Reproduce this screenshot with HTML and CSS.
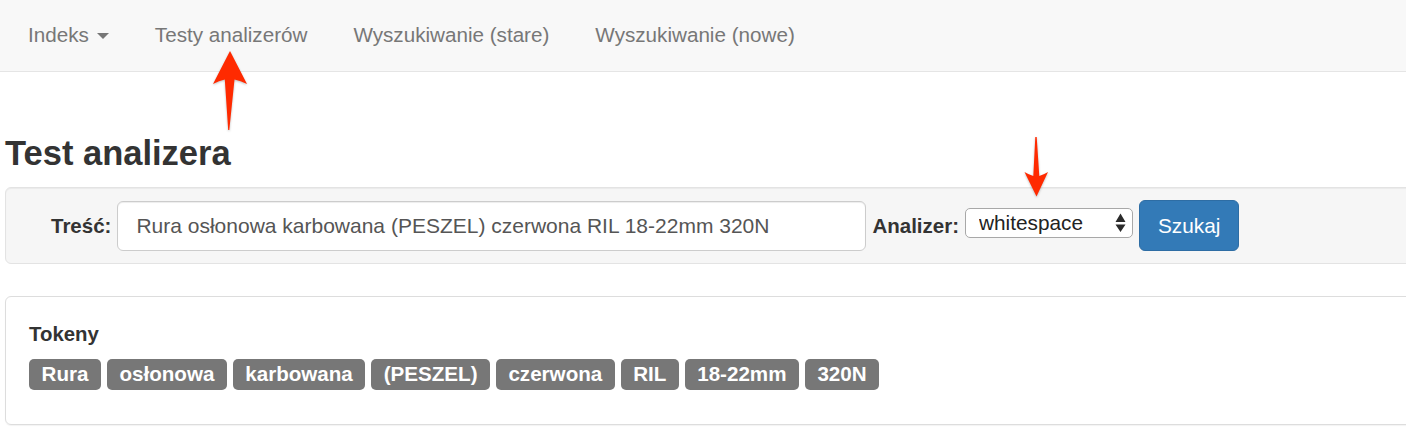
FILE: index.html
```html
<!DOCTYPE html>
<html lang="pl">
<head>
<meta charset="utf-8">
<title>Test analizera</title>
<link rel="stylesheet" href="styles.css">
</head>
<body>
<nav class="navbar">
  <ul class="nav">
    <li><a href="#">Indeks<span class="caret"></span></a></li>
    <li><a href="#">Testy analizerów</a></li>
    <li><a href="#">Wyszukiwanie (stare)</a></li>
    <li><a href="#">Wyszukiwanie (nowe)</a></li>
  </ul>
</nav>
<main class="container">
  <h3 class="title">Test analizera</h3>
  <form class="well">
    <label class="lbl lbl-first" for="q">Treść:</label>
    <input id="q" class="input" type="text" value="Rura osłonowa karbowana (PESZEL) czerwona RIL 18-22mm 320N">
    <label class="lbl" for="an">Analizer:</label>
    <span class="select-wrap">
      <select id="an" class="select"><option>whitespace</option></select>
      <svg class="sel-arrows" width="11" height="19" viewBox="0 0 11 19"><path d="M0.5 9 L5.5 0.5 L10.5 9 Z M0.5 11.5 L5.5 19 L10.5 11.5 Z" fill="#2b2b2b"/></svg>
    </span>
    <button class="btn" type="button">Szukaj</button>
  </form>
  <section class="panel">
    <h4 class="panel-title">Tokeny</h4>
    <div class="tokens">
      <span class="label">Rura</span>
      <span class="label">osłonowa</span>
      <span class="label">karbowana</span>
      <span class="label">(PESZEL)</span>
      <span class="label">czerwona</span>
      <span class="label">RIL</span>
      <span class="label">18-22mm</span>
      <span class="label">320N</span>
    </div>
  </section>
</main>
<svg class="annot annot-up" width="50" height="90" viewBox="0 0 50 90">
  <path d="M25 6 L42 39 Q35.5 35.5 29.5 34.5 L24.3 85 L23.2 85 L19.8 34.5 Q14 35.5 8 39 Z" fill="#ff2a00"/>
</svg>
<svg class="annot annot-down" width="44" height="70" viewBox="0 0 44 70">
  <path d="M20.3 5 L21.7 5 L24.3 44 Q29 42.5 33 40 L21.5 64.5 L9.5 40 Q13.5 42.5 18.3 44 Z" fill="#ff2a00"/>
</svg>
</body>
</html>
```

FILE: styles.css
```css
html, body {
  margin: 0;
  padding: 0;
}
body {
  font-family: "Liberation Sans", Arial, Helvetica, sans-serif;
  color: #333;
  background: #fff;
  overflow: hidden;
  position: relative;
  min-height: 444px;
}
.navbar {
  height: 71px;
  background: #f8f8f8;
  border-bottom: 1px solid #e5e5e5;
}
.nav {
  list-style: none;
  margin: 0;
  padding: 0 0 0 5px;
  display: flex;
}
.nav a {
  display: flex;
  align-items: center;
  height: 71px;
  padding: 0 23px;
  box-sizing: border-box;
  padding-bottom: 2px;
  font-size: 20.65px;
  color: #777;
  text-decoration: none;
}
.caret {
  display: inline-block;
  width: 0;
  height: 0;
  margin-left: 8px;
  margin-top: 2px;
  border-top: 6px solid #777;
  border-left: 6px solid transparent;
  border-right: 6px solid transparent;
}
.container {
  margin: 0 -40px 0 5px;
}
.title {
  margin: 62px 0 15px;
  font-size: 34.5px;
  line-height: 38px;
  font-weight: bold;
  color: #333;
}
.well {
  display: flex;
  align-items: center;
  gap: 6px;
  margin: 0 0 32px;
  padding: 12px 12px 12px 45px;
  background: #f6f6f6;
  border: 1px solid #e3e3e3;
  border-radius: 6px;
  box-shadow: inset 0 1px 1px rgba(0, 0, 0, 0.05);
}
.lbl {
  font-size: 20.5px;
  font-weight: bold;
  color: #333;
}
.input {
  width: 749px;
  height: 50px;
  box-sizing: border-box;
  padding: 0 18px;
  border: 1px solid #ccc;
  border-radius: 6px;
  background: #fff;
  box-shadow: inset 0 1px 1px rgba(0, 0, 0, 0.075);
  font-family: inherit;
  font-size: 21px;
  color: #555;
  outline: none;
}
.select-wrap {
  position: relative;
  display: inline-block;
  margin-bottom: 6px;
}
.select {
  -webkit-appearance: none;
  appearance: none;
  width: 168px;
  height: 30px;
  box-sizing: border-box;
  padding: 0 0 0 13px;
  border: 1px solid #a8a8a8;
  border-radius: 5px;
  background: #fff;
  font-family: inherit;
  font-size: 20.8px;
  color: #222;
  display: block;
}
.sel-arrows {
  position: absolute;
  right: 7px;
  top: 5px;
  pointer-events: none;
}
.btn {
  height: 51px;
  padding: 0 18px;
  border: 1px solid #2e6da4;
  border-radius: 6px;
  background: #337ab7;
  color: #fff;
  font-family: inherit;
  font-size: 20.8px;
}
.panel {
  padding: 21px 23px 34px;
  border: 1px solid #ddd;
  border-radius: 6px;
  box-shadow: 0 1px 1px rgba(0, 0, 0, 0.05);
}
.panel-title {
  margin: 5px 0 13.5px;
  font-size: 20.4px;
  line-height: 22px;
  font-weight: bold;
  color: #333;
}
.tokens {
  display: flex;
  gap: 5.7px;
}
.label {
  display: inline-block;
  padding: 5px 12.6px 6px;
  line-height: 20px;
  font-size: 20.6px;
  font-weight: bold;
  color: #fff;
  background: #777;
  border-radius: 5px;
}
.annot {
  position: absolute;
  filter: drop-shadow(0 1px 1px rgba(0, 0, 0, 0.25));
}
.annot-up {
  left: 205px;
  top: 45px;
}
.annot-down {
  left: 1015px;
  top: 132px;
}
```
